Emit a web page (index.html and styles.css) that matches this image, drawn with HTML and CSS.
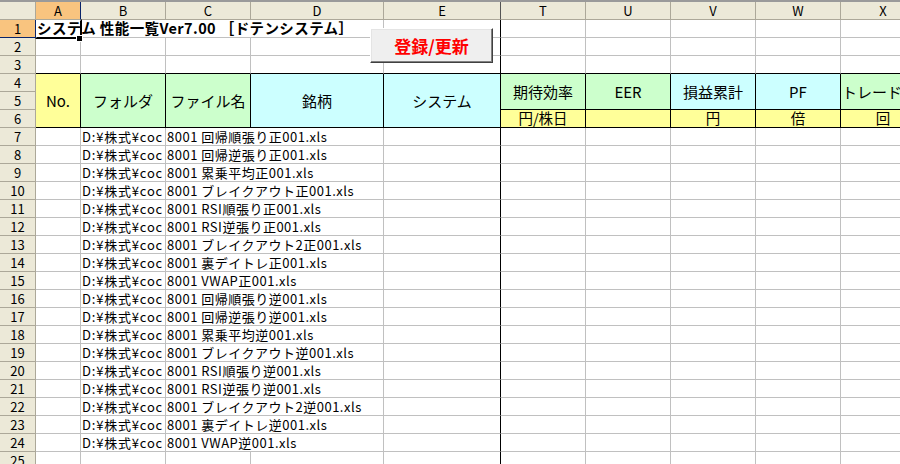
FILE: index.html
```html
<!DOCTYPE html>
<html lang="ja">
<head>
    <meta charset="UTF-8">
    <title>システム性能一覧</title>
    <link rel="stylesheet" href="styles.css">
</head>
<body>
    <div class="sheet">
        <!-- column headers -->
        <div class="hd corner"></div>
        <div class="hd col sel">A</div>
        <div class="hd col">B</div>
        <div class="hd col">C</div>
        <div class="hd col">D</div>
        <div class="hd col fz">E</div>
        <div class="hd col">T</div>
        <div class="hd col">U</div>
        <div class="hd col">V</div>
        <div class="hd col">W</div>
        <div class="hd col">X</div>

        <!-- row 1 -->
        <div class="hd row sel">1</div>
        <div class="cell title">システム 性能一覧Ver7.00 ［ドテンシステム］<span class="cursor"><span class="handle"></span></span></div>
        <div class="cell fz"></div>
        <div class="cell"></div><div class="cell"></div><div class="cell"></div><div class="cell"></div><div class="cell"></div>

        <!-- rows 2-3 -->
        <div class="hd row">2</div>
        <div class="cell"></div><div class="cell"></div><div class="cell"></div><div class="cell"></div><div class="cell fz"></div>
        <div class="cell"></div><div class="cell"></div><div class="cell"></div><div class="cell"></div><div class="cell"></div>
        <div class="hd row">3</div>
        <div class="cell top"></div><div class="cell top"></div><div class="cell top"></div><div class="cell top"></div><div class="cell top fz"></div>
        <div class="cell top"></div><div class="cell top"></div><div class="cell top"></div><div class="cell top"></div><div class="cell top"></div>

        <!-- table header rows 4-6 -->
        <div class="hd row">4</div>
        <div class="cell th yel span3">No.</div>
        <div class="cell th grn span3">フォルダ</div>
        <div class="cell th grn span3">ファイル名</div>
        <div class="cell th cya span3">銘柄</div>
        <div class="cell th cya span3">システム</div>
        <div class="cell th grn span2">期待効率</div>
        <div class="cell th grn span2">EER</div>
        <div class="cell th cya span2">損益累計</div>
        <div class="cell th cya span2">PF</div>
        <div class="cell th grn span2 left">トレード</div>
        <div class="hd row">5</div>
        <div class="hd row">6</div>
        <div class="cell th unit yel">円/株日</div>
        <div class="cell th unit yel"></div>
        <div class="cell th unit yel">円</div>
        <div class="cell th unit yel">倍</div>
        <div class="cell th unit yel">回</div>

        <!-- data rows -->
        <div class="hd row">7</div><div class="cell"></div><div class="cell txt">D:¥株式¥coc</div><div class="cell txt wide">8001 回帰順張り正001.xls</div><div class="cell fz"></div><div class="cell"></div><div class="cell"></div><div class="cell"></div><div class="cell"></div><div class="cell"></div>
        <div class="hd row">8</div><div class="cell"></div><div class="cell txt">D:¥株式¥coc</div><div class="cell txt wide">8001 回帰逆張り正001.xls</div><div class="cell fz"></div><div class="cell"></div><div class="cell"></div><div class="cell"></div><div class="cell"></div><div class="cell"></div>
        <div class="hd row">9</div><div class="cell"></div><div class="cell txt">D:¥株式¥coc</div><div class="cell txt wide">8001 累乗平均正001.xls</div><div class="cell fz"></div><div class="cell"></div><div class="cell"></div><div class="cell"></div><div class="cell"></div><div class="cell"></div>
        <div class="hd row">10</div><div class="cell"></div><div class="cell txt">D:¥株式¥coc</div><div class="cell txt wide">8001 ブレイクアウト正001.xls</div><div class="cell fz"></div><div class="cell"></div><div class="cell"></div><div class="cell"></div><div class="cell"></div><div class="cell"></div>
        <div class="hd row">11</div><div class="cell"></div><div class="cell txt">D:¥株式¥coc</div><div class="cell txt wide">8001 RSI順張り正001.xls</div><div class="cell fz"></div><div class="cell"></div><div class="cell"></div><div class="cell"></div><div class="cell"></div><div class="cell"></div>
        <div class="hd row">12</div><div class="cell"></div><div class="cell txt">D:¥株式¥coc</div><div class="cell txt wide">8001 RSI逆張り正001.xls</div><div class="cell fz"></div><div class="cell"></div><div class="cell"></div><div class="cell"></div><div class="cell"></div><div class="cell"></div>
        <div class="hd row">13</div><div class="cell"></div><div class="cell txt">D:¥株式¥coc</div><div class="cell txt wide">8001 ブレイクアウト2正001.xls</div><div class="cell fz"></div><div class="cell"></div><div class="cell"></div><div class="cell"></div><div class="cell"></div><div class="cell"></div>
        <div class="hd row">14</div><div class="cell"></div><div class="cell txt">D:¥株式¥coc</div><div class="cell txt wide">8001 裏デイトレ正001.xls</div><div class="cell fz"></div><div class="cell"></div><div class="cell"></div><div class="cell"></div><div class="cell"></div><div class="cell"></div>
        <div class="hd row">15</div><div class="cell"></div><div class="cell txt">D:¥株式¥coc</div><div class="cell txt wide">8001 VWAP正001.xls</div><div class="cell fz"></div><div class="cell"></div><div class="cell"></div><div class="cell"></div><div class="cell"></div><div class="cell"></div>
        <div class="hd row">16</div><div class="cell"></div><div class="cell txt">D:¥株式¥coc</div><div class="cell txt wide">8001 回帰順張り逆001.xls</div><div class="cell fz"></div><div class="cell"></div><div class="cell"></div><div class="cell"></div><div class="cell"></div><div class="cell"></div>
        <div class="hd row">17</div><div class="cell"></div><div class="cell txt">D:¥株式¥coc</div><div class="cell txt wide">8001 回帰逆張り逆001.xls</div><div class="cell fz"></div><div class="cell"></div><div class="cell"></div><div class="cell"></div><div class="cell"></div><div class="cell"></div>
        <div class="hd row">18</div><div class="cell"></div><div class="cell txt">D:¥株式¥coc</div><div class="cell txt wide">8001 累乗平均逆001.xls</div><div class="cell fz"></div><div class="cell"></div><div class="cell"></div><div class="cell"></div><div class="cell"></div><div class="cell"></div>
        <div class="hd row">19</div><div class="cell"></div><div class="cell txt">D:¥株式¥coc</div><div class="cell txt wide">8001 ブレイクアウト逆001.xls</div><div class="cell fz"></div><div class="cell"></div><div class="cell"></div><div class="cell"></div><div class="cell"></div><div class="cell"></div>
        <div class="hd row">20</div><div class="cell"></div><div class="cell txt">D:¥株式¥coc</div><div class="cell txt wide">8001 RSI順張り逆001.xls</div><div class="cell fz"></div><div class="cell"></div><div class="cell"></div><div class="cell"></div><div class="cell"></div><div class="cell"></div>
        <div class="hd row">21</div><div class="cell"></div><div class="cell txt">D:¥株式¥coc</div><div class="cell txt wide">8001 RSI逆張り逆001.xls</div><div class="cell fz"></div><div class="cell"></div><div class="cell"></div><div class="cell"></div><div class="cell"></div><div class="cell"></div>
        <div class="hd row">22</div><div class="cell"></div><div class="cell txt">D:¥株式¥coc</div><div class="cell txt wide">8001 ブレイクアウト2逆001.xls</div><div class="cell fz"></div><div class="cell"></div><div class="cell"></div><div class="cell"></div><div class="cell"></div><div class="cell"></div>
        <div class="hd row">23</div><div class="cell"></div><div class="cell txt">D:¥株式¥coc</div><div class="cell txt wide">8001 裏デイトレ逆001.xls</div><div class="cell fz"></div><div class="cell"></div><div class="cell"></div><div class="cell"></div><div class="cell"></div><div class="cell"></div>
        <div class="hd row">24</div><div class="cell"></div><div class="cell txt">D:¥株式¥coc</div><div class="cell txt wide">8001 VWAP逆001.xls</div><div class="cell fz"></div><div class="cell"></div><div class="cell"></div><div class="cell"></div><div class="cell"></div><div class="cell"></div>
        <div class="hd row">25</div><div class="cell"></div><div class="cell"></div><div class="cell"></div><div class="cell"></div><div class="cell fz"></div><div class="cell"></div><div class="cell"></div><div class="cell"></div><div class="cell"></div><div class="cell"></div>

        <button class="btn">登録/更新</button>
    </div>
</body>
</html>
```

FILE: styles.css
```css
* {
    margin: 0;
    padding: 0;
    box-sizing: border-box;
}

body {
    width: 900px;
    height: 464px;
    overflow: hidden;
    background: #fff;
    color: #000;
    font-family: "Noto Sans CJK JP", "Liberation Sans", sans-serif;
}

.sheet {
    position: relative;
    display: grid;
    grid-template-columns: 36px 45px 85px 85px 133px 117px 85px 85px 85px 85px 85px;
    grid-template-rows: 18px;
    grid-auto-rows: 18px;
    border-top: 2px solid #9a9a9a;
}

.cell {
    display: flex;
    align-items: center;
    padding: 0 1px;
    border-right: 1px solid #c0c0c0;
    border-bottom: 1px solid #c0c0c0;
    font-size: 13px;
    line-height: 1;
    white-space: nowrap;
    overflow: hidden;
}

/* column / row headings */
.hd {
    display: flex;
    align-items: center;
    justify-content: center;
    background: #ece9d8;
    border-right: 1px solid #aca899;
    border-bottom: 1px solid #aca899;
    font-size: 13px;
    line-height: 1;
}

.hd.sel {
    background: #f9c47f;
}

.hd.col.sel {
    border-right-color: #0a246a;
}

.hd.row.sel {
    border-bottom-color: #0a246a;
    border-right-color: #0a246a;
}

/* frozen pane split */
.fz {
    border-right-color: #000;
}

.hd.fz {
    border-right: 1px solid #555;
}

/* title in A1 */
.title {
    grid-column: span 4;
    position: relative;
    overflow: visible;
    font-size: 14.5px;
    font-weight: bold;
    letter-spacing: 0.4px;
}

.cursor {
    position: absolute;
    left: -1px;
    top: -1px;
    width: 47px;
    height: 20px;
    border: 2px solid #000;
    border-top-color: transparent;
    border-left-color: transparent;
}

.handle {
    position: absolute;
    left: 40px;
    top: 15px;
    width: 5px;
    height: 5px;
    background: #000;
    outline: 1px solid #fff;
}

/* table header */
.top {
    border-bottom-color: #000;
}

.th {
    justify-content: center;
    border-right-color: #000;
    border-bottom-color: #000;
    font-size: 15px;
}

.th.unit {
    overflow: visible;
    font-size: 14.5px;
}

.th.left {
    justify-content: flex-start;
}

.span3 {
    grid-row: span 3;
}

.span2 {
    grid-row: span 2;
}

.yel {
    background: #ffff99;
}

.grn {
    background: #ccffcc;
}

.cya {
    background: #ccffff;
}

/* data rows */
.txt {
    font-size: 13px;
    letter-spacing: 0.8px;
}

.wide {
    grid-column: span 2;
    letter-spacing: 0.5px;
}

.btn {
    position: absolute;
    left: 370px;
    top: 26px;
    width: 123px;
    height: 35px;
    background: #efefef;
    border: 1px solid;
    border-color: #fff #404040 #404040 #fff;
    box-shadow: inset -1px -1px 0 #808080, inset 1px 1px 0 #e4e4e4;
    color: #ff0000;
    font-family: "Noto Sans CJK JP", sans-serif;
    font-size: 17px;
    font-weight: bold;
    cursor: pointer;
}
```
